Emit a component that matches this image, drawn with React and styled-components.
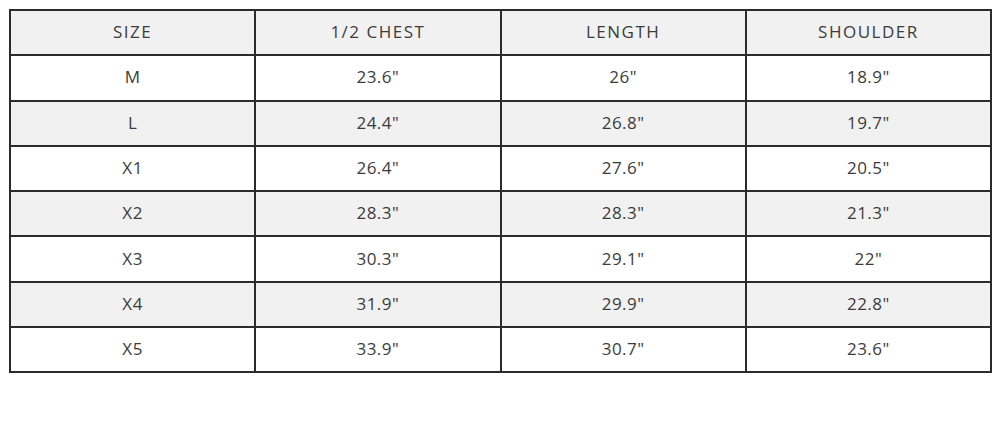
import React from "react";
import styled, { createGlobalStyle } from "styled-components";

const GlobalStyle = createGlobalStyle`
  html, body {
    margin: 0;
    padding: 0;
    background: #ffffff;
  }
`;

const Container = styled.div`
  padding: 9px 8px 0 9px;
  font-family: "Open Sans", Lato, sans-serif;
`;

const SizeTable = styled.table`
  width: 983px;
  border-collapse: collapse;
  table-layout: fixed;
  border: 2px solid #2b2b2b;
`;

const Row = styled.tr`
  height: 45.3px;
  background-color: ${({ $shaded }) => ($shaded ? "#f1f1f1" : "#ffffff")};
`;

const Cell = styled.td`
  border: 2px solid #2b2b2b;
  text-align: center;
  vertical-align: middle;
  padding: 0 0 2px;
  font-size: 17px;
  color: #3c3c3c;
  letter-spacing: 0.5px;
`;

const HeadCell = styled(Cell).attrs({ as: "th" })`
  font-weight: 400;
  letter-spacing: 1.5px;
`;

const rows = [
  ["M", "23.6\"", "26\"", "18.9\""],
  ["L", "24.4\"", "26.8\"", "19.7\""],
  ["X1", "26.4\"", "27.6\"", "20.5\""],
  ["X2", "28.3\"", "28.3\"", "21.3\""],
  ["X3", "30.3\"", "29.1\"", "22\""],
  ["X4", "31.9\"", "29.9\"", "22.8\""],
  ["X5", "33.9\"", "30.7\"", "23.6\""],
];

export default function App() {
  return (
    <Container>
      <GlobalStyle />
      <SizeTable>
        <thead>
          <Row $shaded>
            <HeadCell>SIZE</HeadCell>
            <HeadCell>1/2 CHEST</HeadCell>
            <HeadCell>LENGTH</HeadCell>
            <HeadCell>SHOULDER</HeadCell>
          </Row>
        </thead>
        <tbody>
          {rows.map((r, i) => (
            <Row key={r[0]} $shaded={i % 2 === 1}>
              {r.map((v, j) => (
                <Cell key={j}>{v}</Cell>
              ))}
            </Row>
          ))}
        </tbody>
      </SizeTable>
    </Container>
  );
}
